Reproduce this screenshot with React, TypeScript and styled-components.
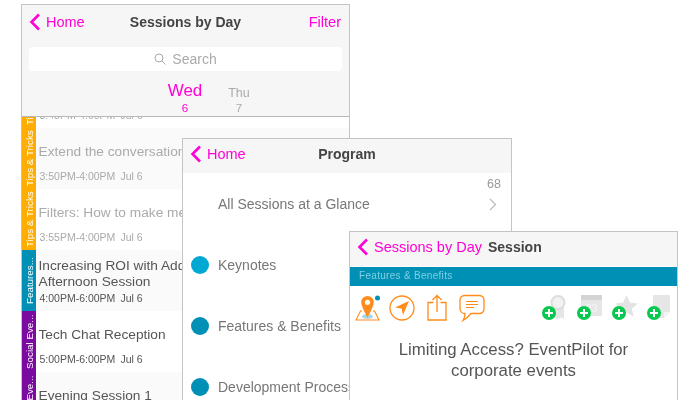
import React from "react";
import styled, { createGlobalStyle } from "styled-components";

const Global = createGlobalStyle`
  html, body { margin: 0; padding: 0; background: #fff; }
  body { font-family: "Liberation Sans", Arial, sans-serif; }
`;

const Canvas = styled.div`
  position: relative;
  width: 700px;
  height: 400px;
  overflow: hidden;
  background: #fff;
  filter: blur(0.45px);
`;

const Phone = styled.section<{ $x: number; $y: number; $w: number }>`
  position: absolute;
  left: ${(p) => p.$x}px;
  top: ${(p) => p.$y}px;
  width: ${(p) => p.$w}px;
  height: 440px;
  box-sizing: border-box;
  border: 1px solid #c4c4c4;
  background: #fff;
  overflow: hidden;
  display: flex;
  flex-direction: column;
`;

const Nav = styled.header<{ $h: number; $shift?: number }>`
  --shift: ${(p) => p.$shift ?? 0}px;
  position: relative;
  flex: none;
  height: ${(p) => p.$h}px;
  box-sizing: border-box;
  display: flex;
  align-items: center;
  justify-content: space-between;
  background: #f6f6f6;
  padding: 0 8px var(--shift) 7px;
  font-size: 14.5px;
  color: #ff00d8;
`;

const Back = styled.span`
  display: flex;
  align-items: center;
  gap: 5px;
  white-space: nowrap;
`;

const NavTitle = styled.h1`
  position: absolute;
  left: 0;
  right: 0;
  top: 0;
  bottom: var(--shift);
  margin: 0;
  display: flex;
  align-items: center;
  justify-content: center;
  font-size: 14px;
  font-weight: 700;
  color: #444;
`;

const InlineTitle = styled.h1`
  margin: 0 0 0 1px;
  font-size: 14px;
  font-weight: 700;
  color: #444;
`;

const Chevron = () => (
  <svg width="12" height="18" viewBox="0 0 12 18" fill="none">
    <path d="M10 1.5 2.5 9l7.5 7.500" stroke="#ff00d8" strokeWidth="2.600" />
  </svg>
);

const ListHeader = styled.div`
  flex: none;
  background: #f6f6f6;
  height: 79px;
  box-sizing: border-box;
  border-bottom: 1px solid #b8b8b8;
  padding: 9px 7px 0;
`;

const SearchBar = styled.div`
  height: 24px;
  border-radius: 4px;
  background: #fff;
  display: flex;
  align-items: center;
  justify-content: center;
  gap: 6px;
  color: #aaa;
  font-size: 14px;
`;

const DayStrip = styled.div`
  display: flex;
  padding-left: 129px;
  margin-top: 6px;
`;

const Day = styled.div<{ $active?: boolean }>`
  width: 54px;
  height: 38px;
  display: flex;
  flex-direction: column;
  align-items: center;
  justify-content: flex-end;
  color: ${(p) => (p.$active ? "#ff00d8" : "#aaa")};
  font-size: ${(p) => (p.$active ? 17 : 12.5)}px;
  line-height: ${(p) => (p.$active ? 20 : 16)}px;
`;

const DayNum = styled.span`
  font-size: 11.5px;
  line-height: 14px;
`;

const SessionsClip = styled.div`
  flex: 1;
  overflow: hidden;
`;

const Sessions = styled.div`
  margin-top: -50px;
`;

const SessionRow = styled.div<{ $alt?: boolean; $muted?: boolean }>`
  height: 61px;
  display: flex;
  background: ${(p) => (p.$alt ? "#fafafa" : "#fff")};
  color: ${(p) => (p.$muted ? "#aaa" : "#555")};
`;

const Stripe = styled.div<{ $color: string }>`
  flex: none;
  width: 14px;
  background: ${(p) => p.$color};
  color: #fff;
  font-size: 9.8px;
  display: flex;
  align-items: center;
  justify-content: center;
  overflow: hidden;
  white-space: nowrap;
  writing-mode: vertical-rl;
  transform: rotate(180deg);
`;

const SessionBody = styled.div`
  padding-left: 2.5px;
  white-space: nowrap;
`;

const SessionTitle = styled.div`
  height: 42px;
  box-sizing: border-box;
  padding-top: 6px;
  display: flex;
  align-items: center;
  font-size: 13.7px;
  line-height: 16px;
`;

const SessionTime = styled.div`
  padding-left: 1px;
  font-size: 10.5px;
  line-height: 13px;
  display: flex;
  gap: 5px;
`;

const MenuRow = styled.div`
  position: relative;
  height: 61px;
  flex: none;
  display: flex;
  align-items: center;
  padding-left: 8px;
  color: #777;
  font-size: 14px;
  white-space: nowrap;
`;

const Dot = styled.span<{ $color: string }>`
  flex: none;
  width: 18px;
  height: 18px;
  border-radius: 50%;
  background: ${(p) => p.$color};
  margin-right: 9px;
`;

const Spacer = styled.span`
  flex: none;
  width: 27px;
`;

const Count = styled.span`
  position: absolute;
  right: 10px;
  top: 4px;
  font-size: 12.5px;
  color: #999;
`;

const Disclosure = styled.span`
  position: absolute;
  right: 14px;
  top: 25px;
  display: flex;
`;

const CategoryBar = styled.div`
  flex: none;
  margin-top: 1px;
  height: 19px;
  box-sizing: border-box;
  padding: 0 0 2px 9px;
  background: #0090b5;
  color: #7fd0e0;
  font-size: 10px;
  letter-spacing: 0.3px;
  display: flex;
  align-items: center;
`;

const Toolbar = styled.div`
  display: flex;
  justify-content: space-between;
  padding: 8px 6px 0 5px;
  height: 27px;
`;

const IconGroup = styled.div<{ $gap: number }>`
  display: flex;
  gap: ${(p) => p.$gap}px;
`;

const Addable = styled.span`
  position: relative;
  display: block;
  width: 35px;
  height: 27px;
  &:last-child {
    width: 24px;
  }
`;

const PlusBadge = styled.span`
  position: absolute;
  left: 0;
  bottom: 1px;
  width: 14px;
  height: 14px;
`;

const Headline = styled.h2`
  margin: 18px 0 0;
  text-align: center;
  font-size: 16.8px;
  line-height: 21px;
  font-weight: 400;
  color: #555;
`;

const O = "#ff8c1a";

const PinSvg = styled.svg`
  margin-right: -5px;
`;

const PinIcon = () => (
  <PinSvg width="27" height="28" viewBox="0 0 27 28" fill="none">
    <ellipse cx="12.500" cy="22.500" rx="5.500" ry="2.600" fill="#a9d6e5" />
    <path d="M7 17H5.500L1 26h23l-4.500-9H18" stroke={O} strokeWidth="1.100" />
    <path d="M12.500 2a6.300 6.300 0 0 0-6.300 6.300c0 4.200 6.300 15.200 6.300 15.200s6.300-11 6.300-15.200A6.300 6.300 0 0 0 12.500 2Z" fill={O} />
    <circle cx="12.500" cy="8.300" r="2.600" fill="#fff" />
    <circle cx="22.500" cy="4" r="2.500" fill="#0090b5" />
  </PinSvg>
);

const NavigateIcon = () => (
  <svg width="26" height="27" viewBox="0 0 26 27" fill="none">
    <circle cx="13" cy="14" r="12" stroke={O} strokeWidth="1.300" />
    <path d="M20 7 6 13.500l6.500 1 1.500 6.500Z" fill={O} />
  </svg>
);

const ShareIcon = () => (
  <svg width="20" height="27" viewBox="0 0 20 27" fill="none" stroke={O} strokeWidth="1.300">
    <path d="M6.500 8.500H1v17.500h18V8.500h-5.500" />
    <path d="M10 18V1.500M5.500 6 10 1.500 14.500 6" />
  </svg>
);

const ChatIcon = () => (
  <svg width="27" height="28" viewBox="0 0 27 28" fill="none" stroke={O} strokeWidth="1.300">
    <path d="M5.500 1.500h15a4.500 4.500 0 0 1 4.500 4.500v9a4.500 4.500 0 0 1-4.500 4.500H12c-2 2.500-4.500 5-8 7 1.500-2.500 2-4.500 2-7A5 5 0 0 1 1 15V6a4.500 4.500 0 0 1 4.500-4.500Z" />
    <path d="M7 7.500h12M7 10.500h12M7 13.500h8" strokeWidth="1.100" />
  </svg>
);

const Plus = () => (
  <svg width="14" height="14" viewBox="0 0 14 14">
    <circle cx="7" cy="7" r="7" fill="#08c850" />
    <path d="M7 3v8M3 7h8" stroke="#fff" strokeWidth="2" />
  </svg>
);

const AwardIcon = () => (
  <svg width="35" height="27" viewBox="0 0 35 27" fill="none">
    <path d="M11 12v10l4 3.500 4-2 3 1.500V12Z" fill="#e6e6e6" />
    <circle cx="16" cy="8.500" r="6.500" fill="#f2f2f2" stroke="#dcdcdc" strokeWidth="2" />
  </svg>
);

const CalendarIcon = () => (
  <svg width="35" height="27" viewBox="0 0 35 27">
    <rect x="4" y="1" width="21" height="21" fill="#e6e6e6" />
    <rect x="4" y="1" width="21" height="5" fill="#d4d4d4" />
    <text x="14.500" y="18" fontSize="11" textAnchor="middle" fill="#f5f5f5" fontFamily="Liberation Sans, sans-serif">23</text>
  </svg>
);

const StarIcon = () => (
  <svg width="35" height="27" viewBox="0 0 35 27">
    <path d="m14.500 1 3.400 7.600 8.100.8-6.100 5.400 1.800 8-7.200-4.200-7.200 4.200 1.800-8L3 9.400l8.100-.8Z" fill="#e4e4e4" />
  </svg>
);

const NoteIcon = () => (
  <svg width="24" height="27" viewBox="0 0 24 27">
    <path d="M6 1h17v17l-6 6H6Z" fill="#e6e6e6" />
    <path d="m23 18-6 6v-6Z" fill="#f4f4f4" />
  </svg>
);

const MagnifierIcon = () => (
  <svg width="12" height="12" viewBox="0 0 12 12" fill="none" stroke="#aaa" strokeWidth="1">
    <circle cx="5" cy="5" r="4" />
    <path d="m8 8 3.500 3.500" />
  </svg>
);

const sessions = [
  { label: "Tips & Tricks", color: "#ffad00", title: ["Extend the conversation with Live Polls"], time: "3:45PM-4:00PM", muted: true, alt: false },
  { label: "Tips & Tricks", color: "#ffad00", title: ["Extend the conversation with Live Polls"], time: "3:50PM-4:00PM", muted: true, alt: true },
  { label: "Tips & Tricks", color: "#ffad00", title: ["Filters: How to make meetings easier"], time: "3:55PM-4:00PM", muted: true, alt: false },
  { label: "Features...", color: "#0090b5", title: ["Increasing ROI with Add-ons", "Afternoon Session"], time: "4:00PM-6:00PM", muted: false, alt: true },
  { label: "Social Eve...", color: "#7a0aa0", title: ["Tech Chat Reception"], time: "5:00PM-6:00PM", muted: false, alt: false },
  { label: "Social Eve...", color: "#7a0aa0", title: ["Evening Session 1"], time: "6:00PM-7:00PM", muted: false, alt: true },
];

export default function App() {
  return (
    <Canvas>
      <Global />
      <Phone $x={21} $y={4} $w={329}>
        <Nav $h={33}>
          <Back><Chevron />Home</Back>
          <NavTitle>Sessions by Day</NavTitle>
          <span>Filter</span>
        </Nav>
        <ListHeader>
          <SearchBar><MagnifierIcon />Search</SearchBar>
          <DayStrip>
            <Day $active>Wed<DayNum>6</DayNum></Day>
            <Day>Thu<DayNum>7</DayNum></Day>
          </DayStrip>
        </ListHeader>
        <SessionsClip>
          <Sessions>
            {sessions.map((s, i) => (
              <SessionRow key={i} $alt={s.alt} $muted={s.muted}>
                <Stripe $color={s.color}>{s.label}</Stripe>
                <SessionBody>
                  <SessionTitle>
                    <div>{s.title.map((t) => <div key={t}>{t}</div>)}</div>
                  </SessionTitle>
                  <SessionTime><span>{s.time}</span><span>Jul 6</span></SessionTime>
                </SessionBody>
              </SessionRow>
            ))}
          </Sessions>
        </SessionsClip>
      </Phone>

      <Phone $x={182} $y={138} $w={330}>
        <Nav $h={34} $shift={4}>
          <Back><Chevron />Home</Back>
          <NavTitle>Program</NavTitle>
        </Nav>
        <MenuRow>
          <Spacer />
          All Sessions at a Glance
          <Count>68</Count>
          <Disclosure>
            <svg width="8" height="13" viewBox="0 0 8 13" fill="none">
              <path d="m1 1 5.500 5.500L1 12" stroke="#bbb" strokeWidth="1.200" />
            </svg>
          </Disclosure>
        </MenuRow>
        <MenuRow><Dot $color="#00a8d4" />Keynotes</MenuRow>
        <MenuRow><Dot $color="#0090b5" />Features &amp; Benefits</MenuRow>
        <MenuRow><Dot $color="#0090b5" />Development Process</MenuRow>
      </Phone>

      <Phone $x={349} $y={231} $w={329}>
        <Nav $h={34} $shift={4}>
          <Back><Chevron />Sessions by Day<InlineTitle>Session</InlineTitle></Back>
        </Nav>
        <CategoryBar>Features &amp; Benefits</CategoryBar>
        <Toolbar>
          <IconGroup $gap={12}>
            <PinIcon />
            <NavigateIcon />
            <ShareIcon />
            <ChatIcon />
          </IconGroup>
          <IconGroup $gap={0}>
            <Addable><AwardIcon /><PlusBadge><Plus /></PlusBadge></Addable>
            <Addable><CalendarIcon /><PlusBadge><Plus /></PlusBadge></Addable>
            <Addable><StarIcon /><PlusBadge><Plus /></PlusBadge></Addable>
            <Addable><NoteIcon /><PlusBadge><Plus /></PlusBadge></Addable>
          </IconGroup>
        </Toolbar>
        <Headline>Limiting Access? EventPilot for<br />corporate events</Headline>
      </Phone>
    </Canvas>
  );
}
